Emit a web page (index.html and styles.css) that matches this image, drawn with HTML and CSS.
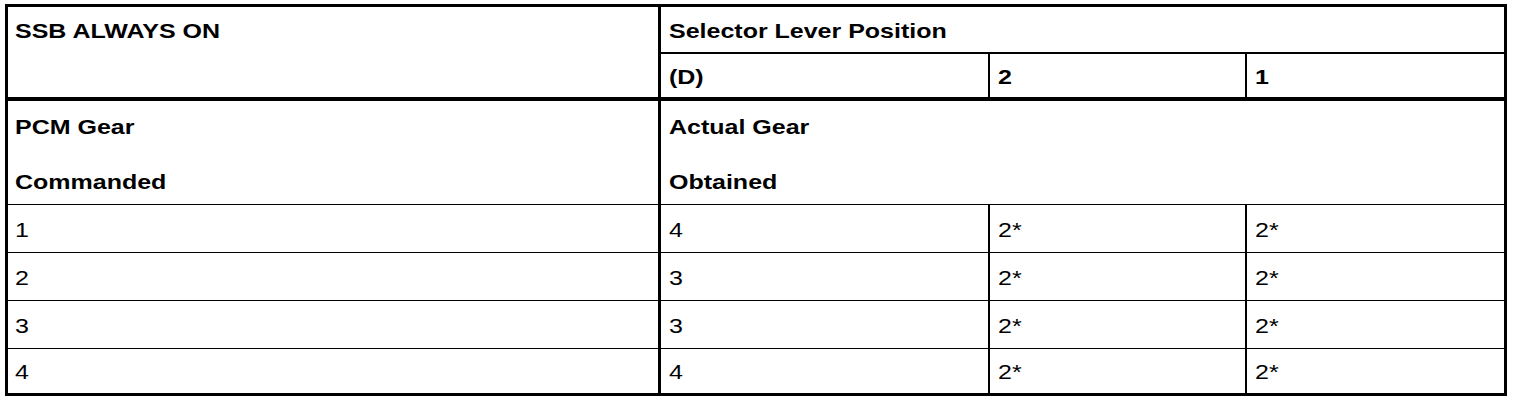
FILE: index.html
```html
<!DOCTYPE html>
<html lang="en">
<head>
<meta charset="utf-8">
<title>SSB Always On</title>
<link rel="stylesheet" href="styles.css">
</head>
<body>
<div class="page">
  <table class="gear-table">
    <colgroup>
      <col class="c1"><col class="c2"><col class="c3"><col class="c4">
    </colgroup>
    <tr class="r-head1">
      <td class="cell ssb bold div-col1 div-thick" rowspan="2"><span class="t">SSB ALWAYS ON</span></td>
      <td class="cell bold div-mid" colspan="3"><span class="t">Selector Lever Position</span></td>
    </tr>
    <tr class="r-head2">
      <td class="cell bold div-col div-thick"><span class="t">(D)</span></td>
      <td class="cell bold div-col div-thick"><span class="t">2</span></td>
      <td class="cell bold div-thick"><span class="t">1</span></td>
    </tr>
    <tr class="r-sub">
      <td class="cell two bold div-col1 div-thin"><div class="ln"><span class="t">PCM Gear</span></div><div class="ln"><span class="t">Commanded</span></div></td>
      <td class="cell two bold div-thin" colspan="3"><div class="ln"><span class="t">Actual Gear</span></div><div class="ln"><span class="t">Obtained</span></div></td>
    </tr>
    <tr class="r-body">
      <td class="cell div-col1 div-thin"><span class="t">1</span></td>
      <td class="cell div-col div-thin"><span class="t">4</span></td>
      <td class="cell div-col div-thin"><span class="t">2*</span></td>
      <td class="cell div-thin"><span class="t">2*</span></td>
    </tr>
    <tr class="r-body">
      <td class="cell div-col1 div-thin"><span class="t">2</span></td>
      <td class="cell div-col div-thin"><span class="t">3</span></td>
      <td class="cell div-col div-thin"><span class="t">2*</span></td>
      <td class="cell div-thin"><span class="t">2*</span></td>
    </tr>
    <tr class="r-body">
      <td class="cell div-col1 div-thin"><span class="t">3</span></td>
      <td class="cell div-col div-thin"><span class="t">3</span></td>
      <td class="cell div-col div-thin"><span class="t">2*</span></td>
      <td class="cell div-thin"><span class="t">2*</span></td>
    </tr>
    <tr class="r-last">
      <td class="cell div-col1"><span class="t">4</span></td>
      <td class="cell div-col"><span class="t">4</span></td>
      <td class="cell div-col"><span class="t">2*</span></td>
      <td class="cell"><span class="t">2*</span></td>
    </tr>
  </table>
</div>
</body>
</html>
```
FILE: styles.css
```css
* {
  box-sizing: border-box;
}

html, body {
  margin: 0;
  padding: 0;
  background: #fff;
}

body {
  font-family: "Liberation Sans", Arial, sans-serif;
  font-size: 21px;
  color: #000;
}

.page {
  padding: 4px 0 0 5px;
}

.gear-table {
  width: 1502px;
  table-layout: fixed;
  border-collapse: separate;
  border-spacing: 0;
  border: 3px solid #000;
}

.c1 { width: 653px; }
.c2 { width: 329px; }
.c3 { width: 257px; }
.c4 { width: 257px; }

.cell {
  padding: 2px 0 0 8px;
  vertical-align: middle;
  line-height: 24px;
  white-space: nowrap;
  overflow: hidden;
}

.bold { font-weight: bold; }

.t {
  display: inline-block;
  transform: scaleX(1.19);
  transform-origin: 0 50%;
}

.div-col1 {
  border-right: 3px solid #000;
  padding-left: 7px;
}

.div-col {
  border-right: 2px solid #000;
}

.div-mid { border-bottom: 2px solid #000; }
.div-thick { border-bottom: 4px solid #000; }
.div-thin { border-bottom: 1px solid #000; }

.r-head1 .cell { height: 47px; }
.r-head2 .cell { height: 47px; }

.ssb {
  vertical-align: top;
  padding-top: 12px;
}

.r-sub .cell { height: 104px; }

.two {
  vertical-align: top;
  padding-top: 14px;
}

.ln + .ln {
  margin-top: 31px;
}

.r-body .cell { height: 48px; }
.r-last .cell { height: 44px; }
```
